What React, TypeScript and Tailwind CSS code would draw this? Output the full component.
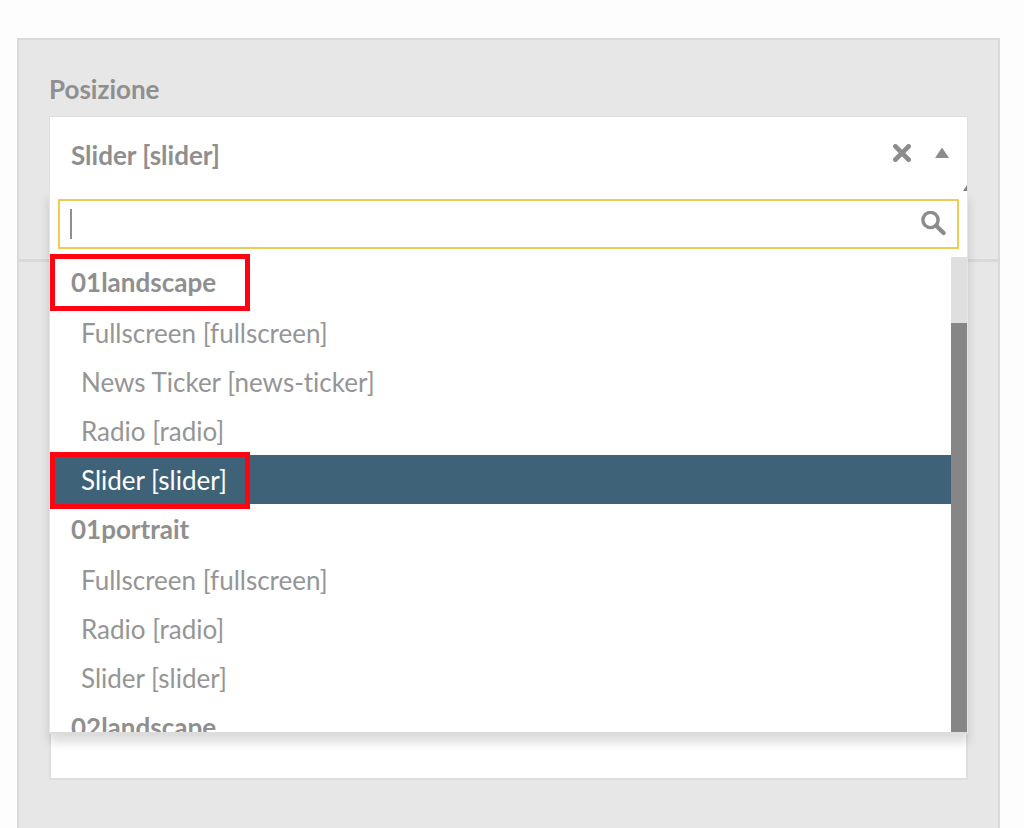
import React, { useState } from 'react';

type Option = { id: string; label: string; marked?: boolean };
type Group = { name: string; marked?: boolean; options: Option[] };

const groups: Group[] = [
  {
    name: '01landscape',
    marked: true,
    options: [
      { id: 'l1-fullscreen', label: 'Fullscreen [fullscreen]' },
      { id: 'l1-news', label: 'News Ticker [news-ticker]' },
      { id: 'l1-radio', label: 'Radio [radio]' },
      { id: 'l1-slider', label: 'Slider [slider]', marked: true },
    ],
  },
  {
    name: '01portrait',
    options: [
      { id: 'p1-fullscreen', label: 'Fullscreen [fullscreen]' },
      { id: 'p1-radio', label: 'Radio [radio]' },
      { id: 'p1-slider', label: 'Slider [slider]' },
    ],
  },
  { name: '02landscape', options: [] },
];

function Marker() {
  return (
    <span
      aria-hidden="true"
      className="pointer-events-none absolute -top-[3px] left-0 z-10 h-[57px] w-50 border-5 border-[#ff0410]"
    />
  );
}

function OptionList({ selected, onSelect }: { selected: string; onSelect: (id: string) => void }) {
  return (
    <ul role="listbox" aria-label="Posizione" className="min-w-0 flex-1 pt-1 text-[26px] leading-[50px]">
      {groups.map((group) => (
        <li key={group.name} role="group" aria-label={group.name}>
          <div className="relative h-[51px] pl-[21px] font-bold">
            {group.name}
            {group.marked && <Marker />}
          </div>
          <ul role="presentation">
            {group.options.map((option) => (
              <li
                key={option.id}
                role="option"
                aria-selected={option.id === selected}
                onClick={() => onSelect(option.id)}
                className={
                  option.id === selected
                    ? 'relative h-[49px] cursor-pointer bg-[#3e6278] pl-[31px] text-white'
                    : 'relative h-[49px] cursor-pointer pl-[31px] text-[#959595]'
                }
              >
                {option.label}
                {option.marked && <Marker />}
              </li>
            ))}
          </ul>
        </li>
      ))}
    </ul>
  );
}

function Dropdown({ selected, onSelect }: { selected: string; onSelect: (id: string) => void }) {
  const [query, setQuery] = useState('');
  return (
    <div className="absolute inset-x-0 top-[75px] z-10 border-x border-b-2 border-x-[#e4e4e4] border-b-[#dcdcdc] bg-white shadow-[0_8px_10px_rgba(0,0,0,0.15)]">
      <div className="px-2 pt-2 pb-1">
        <div className="relative flex h-[50px] items-center border-2 border-[#ebcd55] px-2.5">
          {query === '' && <span aria-hidden="true" className="absolute left-2.5 h-[30px] w-0.5 bg-[#8f8f8f]" />}
          <input
            type="text"
            aria-label="Cerca posizione"
            value={query}
            onChange={(e) => setQuery(e.target.value)}
            className="min-w-0 flex-1 bg-transparent text-[26px] outline-none"
          />
          <svg aria-hidden="true" viewBox="0 0 26 26" className="size-[26px]" fill="none" stroke="#8c8c8c">
            <circle cx="9.5" cy="9" r="7.6" strokeWidth="3.4" />
            <path d="M15 14.5 L22.6 22" strokeWidth="4.4" strokeLinecap="round" />
          </svg>
        </div>
      </div>
      <div className="flex h-[479px] overflow-hidden">
        <OptionList selected={selected} onSelect={onSelect} />
        <div aria-hidden="true" className="mt-1 w-4 bg-[#dfdfdf] pt-[66px]">
          <div className="h-full bg-[#868686]" />
        </div>
      </div>
    </div>
  );
}

export default function App() {
  const [selected, setSelected] = useState('l1-slider');
  const current = groups.flatMap((g) => g.options).find((o) => o.id === selected);

  return (
    <div className="h-screen overflow-hidden bg-[#fdfdfd] pt-[38px] pr-6 pl-[17px] font-['Lato',sans-serif] text-[#8f8f8f] [font-variant-ligatures:none]">
      <main className="min-h-full border-2 border-b-0 border-[#d9d9d9] bg-[#e7e7e7]">
        <section className="h-[222px] border-b-3 border-[#d9d9d9] px-[30px] pt-[30px]">
          <h2 id="position-label" className="h-[46px] text-[26px] leading-[38px] font-bold">
            Posizione
          </h2>
          <div className="relative">
            <div className="relative flex h-[76px] items-start border border-[#dedede] bg-white pr-[18px] pl-[21px]">
              <button
                type="button"
                aria-labelledby="position-label position-value"
                aria-expanded="true"
                className="flex-1 text-left text-[26px] leading-[76px] font-bold"
              >
                <span id="position-value">{current ? current.label : ''}</span>
              </button>
              <div className="flex h-[72px] items-center gap-6">
                <button type="button" aria-label="Rimuovi" onClick={() => setSelected('')}>
                  <svg viewBox="0 0 18 18" className="size-[18px]" fill="none" stroke="#8c8c8c" strokeWidth="4.8">
                    <path d="M2.4 2.4 L15.6 15.6 M15.6 2.4 L2.4 15.6" strokeLinecap="round" />
                  </svg>
                </button>
                <svg aria-hidden="true" viewBox="0 0 14 12" className="h-3 w-3.5" fill="#8c8c8c">
                  <path d="M7 0.5 L14 11 H0 Z" />
                </svg>
              </div>
              <svg aria-hidden="true" viewBox="0 0 4 6" className="absolute right-0 bottom-0 h-1.5 w-1" fill="#808080">
                <path d="M4 0 V6 H0 Z" />
              </svg>
            </div>
            <Dropdown selected={selected} onSelect={setSelected} />
          </div>
        </section>
        <section className="px-[30px] pt-10">
          <textarea
            aria-label="Note"
            className="block h-[478px] w-full resize-none border-2 border-[#dedede] bg-white"
          />
        </section>
      </main>
    </div>
  );
}
